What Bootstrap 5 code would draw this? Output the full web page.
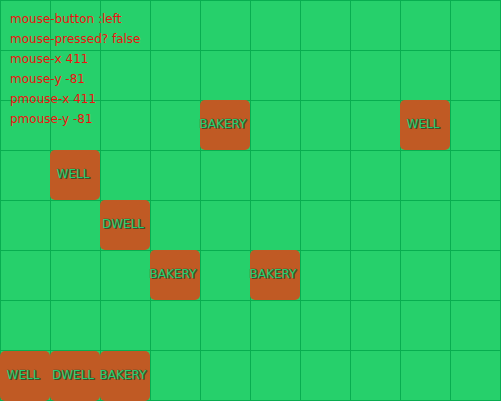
<!DOCTYPE html>
<html lang="en">
<head>
<meta charset="utf-8">
<meta name="viewport" content="width=device-width, initial-scale=1">
<title>Village grid</title>
<link href="https://cdn.jsdelivr.net/npm/bootstrap@5.3.0/dist/css/bootstrap.min.css" rel="stylesheet">
<style>
body { background: #26d06b; font-family: "DejaVu Sans", sans-serif; font-size: 12px; line-height: 20px; }
.board {
  display: grid;
  grid-template-columns: repeat(auto-fill, 50px);
  grid-template-rows: repeat(7, 50px) 51px;
  background-image: linear-gradient(to right, #08ad50 1px, transparent 1px), linear-gradient(#08ad50 1px, transparent 1px);
  background-size: 50px 50px;
}
.building { height: 50px; background: #c05a24; border-radius: 5px; color: #22d070; padding: 0 4px 2px 0; text-shadow: 1px 1px 0 #4a4a2a, 1px 0 0 #4a4a2a, -1px 0 0 #6a4a2660, 0 -1px 0 #6a4a2660; }
.debug-log { color: #f01010; padding: 9px 10px; }
.c1 { grid-column: 1; } .c2 { grid-column: 2; } .c3 { grid-column: 3; } .c4 { grid-column: 4; }
.c5 { grid-column: 5; } .c6 { grid-column: 6; } .c9 { grid-column: 9; }
.r3 { grid-row: 3; } .r4 { grid-row: 4; } .r5 { grid-row: 5; } .r6 { grid-row: 6; } .r8 { grid-row: 8; }
</style>
<script src="https://cdn.jsdelivr.net/npm/bootstrap@5.3.0/dist/js/bootstrap.bundle.min.js"></script>
</head>
<body>
<main class="position-relative">
  <div class="board min-vh-100">
    <div class="building c5 r3 d-flex align-items-center justify-content-center">BAKERY</div>
    <div class="building c9 r3 d-flex align-items-center justify-content-center">WELL</div>
    <div class="building c2 r4 d-flex align-items-center justify-content-center">WELL</div>
    <div class="building c3 r5 d-flex align-items-center justify-content-center">DWELL</div>
    <div class="building c4 r6 d-flex align-items-center justify-content-center">BAKERY</div>
    <div class="building c6 r6 d-flex align-items-center justify-content-center">BAKERY</div>
    <div class="building c1 r8 d-flex align-items-center justify-content-center align-self-end">WELL</div>
    <div class="building c2 r8 d-flex align-items-center justify-content-center align-self-end">DWELL</div>
    <div class="building c3 r8 d-flex align-items-center justify-content-center align-self-end">BAKERY</div>
  </div>
  <div class="debug-log position-absolute top-0 start-0">
    <div>mouse-button :left</div>
    <div>mouse-pressed? false</div>
    <div>mouse-x 411</div>
    <div>mouse-y -81</div>
    <div>pmouse-x 411</div>
    <div>pmouse-y -81</div>
  </div>
</main>
</body>
</html>
